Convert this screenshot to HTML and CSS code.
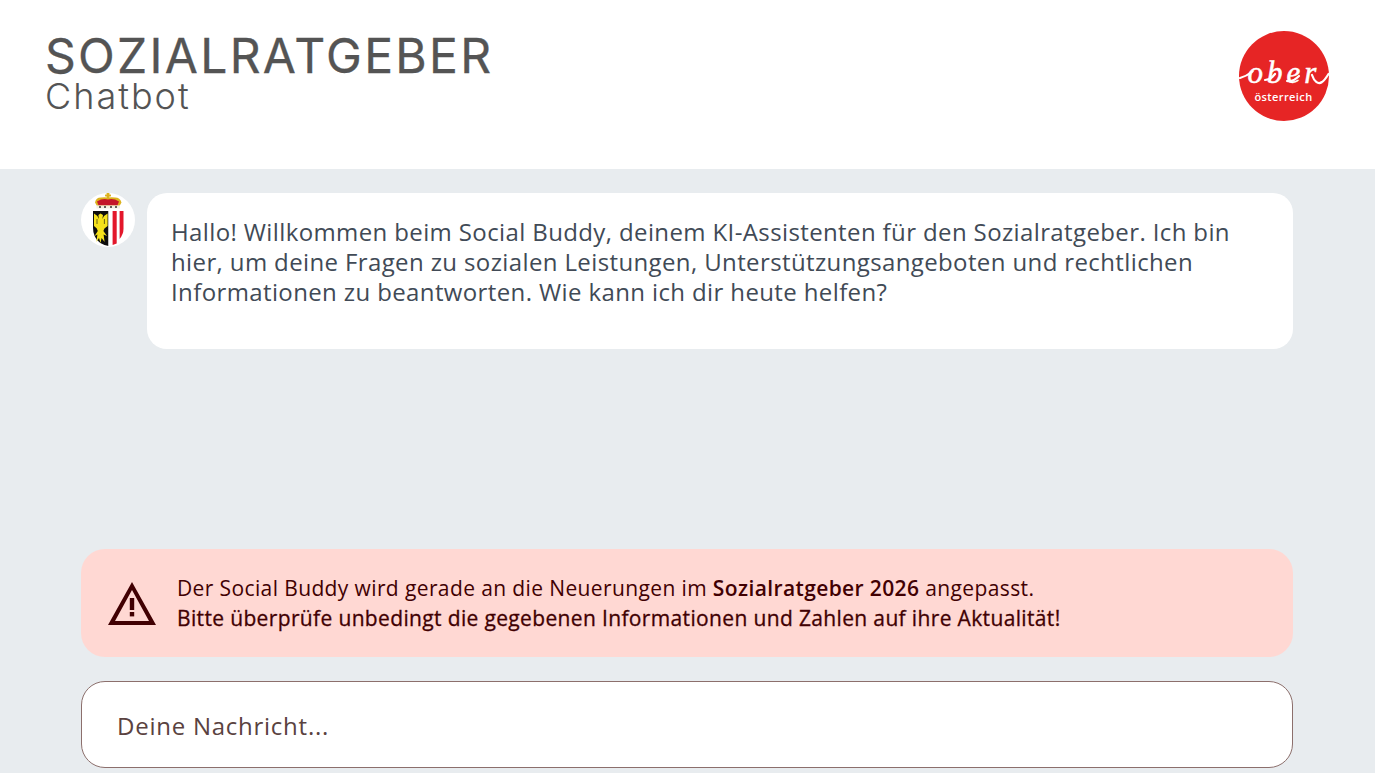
FILE: index.html
```html
<!DOCTYPE html>
<html lang="de">
<head>
    <meta charset="UTF-8">
    <meta name="viewport" content="width=device-width, initial-scale=1.0">
    <title>Sozialratgeber Chatbot</title>
    <link rel="stylesheet" href="styles.css">
</head>
<body>
    <header class="top-bar">
        <div class="brand">
            <h1 class="brand-title">SOZIALRATGEBER</h1>
            <p class="brand-sub">Chatbot</p>
        </div>
        <svg class="logo" viewBox="0 0 90 90" role="img" aria-label="oberösterreich">
            <circle cx="45" cy="45" r="45" fill="#e62525"/>
            <path class="logo-swoosh" d="M1 47 C5 46 9 44 13.5 40.5"/>
            <path class="logo-swoosh" d="M26 49 C30 49 33 47 36 43"/>
            <path class="logo-swoosh" d="M48 50 C53 51 57 48 60 45"/>
            <path class="logo-swoosh" d="M73 44 C75 50 79 54 83 51 C85 50 87 47 89.5 43"/>
            <text class="logo-ober" x="45" y="52" text-anchor="middle">ober</text>
            <text class="logo-land" x="44.5" y="70" text-anchor="middle">österreich</text>
        </svg>
    </header>

    <main class="chat">
        <div class="messages">
            <div class="message">
                <div class="avatar">
                    <svg class="crest" viewBox="0 0 54 54">
                        <rect x="25.6" y="0" width="2.8" height="6" fill="#dcb21e"/>
                        <rect x="24" y="1.6" width="6" height="1.8" fill="#dcb21e"/>
                        <path d="M14 9.5 Q15 4.5 20 4.6 Q25 3.6 27 5 Q29 3.6 34 4.6 Q39 4.5 40.5 9.5 L38.5 13 H16 Z" fill="#dcb21e"/>
                        <path d="M17.6 12.6 L16 8.4 Q21.5 5 27 6.4 Q32.5 5 38 8.4 L36.4 12.6 Z" fill="#c4162a"/>
                        <rect x="15.5" y="12.4" width="23.5" height="3" fill="#f3f0e2"/>
                        <circle cx="19" cy="13.9" r="1" fill="#333"/>
                        <circle cx="24" cy="13.9" r="1" fill="#333"/>
                        <circle cx="30" cy="13.9" r="1" fill="#333"/>
                        <circle cx="35" cy="13.9" r="1" fill="#333"/>
                        <path d="M12 18 H27.5 V53 Q17 51 13.6 43 Q12 39 12 35 Z" fill="#0d0d0d"/>
                        <path d="M27.5 18 H42.5 V35 Q42.5 48 27.5 53 Z" fill="#fff"/>
                        <path d="M31.6 18 H35.7 V50.6 L31.6 52 Z" fill="#e3172b"/>
                        <path d="M38.6 18 H42.5 V36 Q42.5 41 38.6 46 Z" fill="#e3172b"/>
                        <path d="M19.5 20.5 L22 22 L21.4 26 L23 23 L26.6 20.5 L26.6 33 L23.4 35.5 L22.4 38 L26 43 L22.6 41.4 L23.6 49 L20.6 45 L19.5 50 L18 45 L15.4 49 L16.4 41.4 L13.6 43 L16.8 38 L15.8 35.5 L13 33 L13 20.5 L16.4 23 L17.8 26 L17.4 22 Z" fill="#f5e11c"/>
                        <path d="M16 26 V31 M23.4 26 V31" stroke="#0d0d0d" stroke-width=".6"/>
                    </svg>
                </div>
                <div class="bubble">
                    <p>Hallo! Willkommen beim Social Buddy, deinem KI-Assistenten für den Sozialratgeber. Ich bin hier, um deine Fragen zu sozialen Leistungen, Unterstützungsangeboten und rechtlichen Informationen zu beantworten. Wie kann ich dir heute helfen?</p>
                </div>
            </div>
        </div>

        <div class="notice">
            <svg class="notice-icon" viewBox="0 0 48 43">
                <path fill-rule="evenodd" d="M24 0 L48 43 H0 Z M24 8 L7 39 H41 Z" fill="#410002"/>
                <rect x="21.8" y="16" width="4.4" height="12" fill="#410002"/>
                <rect x="21.8" y="30" width="4.4" height="4.4" fill="#410002"/>
            </svg>
            <p class="notice-text">Der Social Buddy wird gerade an die Neuerungen im <strong>Sozialratgeber 2026</strong> angepasst.<br><span class="notice-strong">Bitte überprüfe unbedingt die gegebenen Informationen und Zahlen auf ihre Aktualität!</span></p>
        </div>

        <form class="composer">
            <input class="composer-input" type="text" placeholder="Deine Nachricht...">
        </form>
    </main>
</body>
</html>
```

FILE: styles.css
```css
* {
    box-sizing: border-box;
}
html, body {
    height: 100%;
}
body {
    margin: 0;
    display: flex;
    flex-direction: column;
    overflow: hidden;
    background-color: #e8ecef;
    font-family: "Open Sans", "Noto Sans", sans-serif;
}
.top-bar {
    height: 169px;
    flex: none;
    background-color: #fff;
    display: flex;
    justify-content: space-between;
    align-items: flex-start;
    padding: 31px 46px 0 45px;
}
.brand-title {
    margin: 0;
    font-family: Inter, "Open Sans", sans-serif;
    font-size: 48px;
    font-weight: 400;
    line-height: 49px;
    letter-spacing: 2.3px;
    -webkit-text-stroke: .3px #545454;
    color: #545454;
}
.brand-sub {
    margin: 0;
    font-family: Inter, "Open Sans", sans-serif;
    font-size: 36px;
    font-weight: 300;
    line-height: 32px;
    letter-spacing: 2px;
    color: #545454;
}
.logo {
    width: 90px;
    height: 90px;
}
.logo-swoosh {
    fill: none;
    stroke: #fff;
    stroke-width: 2.2;
    stroke-linecap: round;
}
.logo-ober {
    font-family: "Liberation Serif", serif;
    font-style: italic;
    font-size: 31px;
    letter-spacing: 4px;
    stroke: #fff;
    stroke-width: .5px;
    fill: #fff;
}
.logo-land {
    font-family: "Open Sans", sans-serif;
    font-size: 11px;
    font-weight: 600;
    letter-spacing: .4px;
    fill: #fff;
}
.chat {
    flex: 1;
    min-height: 0;
    display: flex;
    flex-direction: column;
    padding: 24px 82px 5px 81px;
}
.messages {
    flex: 1;
    min-height: 0;
}
.message {
    display: flex;
    gap: 12px;
}
.avatar {
    width: 54px;
    height: 54px;
    flex: none;
    border-radius: 50%;
    background-color: #fff;
}
.crest {
    display: block;
    width: 54px;
    height: 54px;
}
.bubble {
    flex: 1;
    background-color: #fff;
    border-radius: 20px;
    padding: 24px 24px 42px;
    font-size: 24px;
    line-height: 30px;
    letter-spacing: .38px;
    color: #414a56;
}
.bubble p {
    margin: 0;
}
.notice {
    height: 108px;
    flex: none;
    display: flex;
    align-items: center;
    gap: 21px;
    padding: 0 24px 0 27px;
    background-color: #ffd8d3;
    border-radius: 24px;
    color: #410002;
}
.notice-icon {
    width: 48px;
    height: 43px;
    flex: none;
}
.notice-text {
    margin: 0;
    font-size: 21px;
    line-height: 30px;
    letter-spacing: .38px;
}
.notice-text strong {
    font-weight: 600;
}
.notice-strong {
    font-weight: 400;
    letter-spacing: .35px;
    -webkit-text-stroke: .3px #410002;
}
.composer {
    margin-top: 24px;
    flex: none;
}
.composer-input {
    display: block;
    width: 100%;
    height: 87px;
    padding: 2px 35px 0;
    border: 1px solid #8c6f6c;
    border-radius: 24px;
    background-color: #fff;
    font-family: "Open Sans", sans-serif;
    font-size: 24px;
    letter-spacing: .75px;
    outline: none;
}
.composer-input::placeholder {
    color: #5a4240;
    opacity: 1;
}
```
